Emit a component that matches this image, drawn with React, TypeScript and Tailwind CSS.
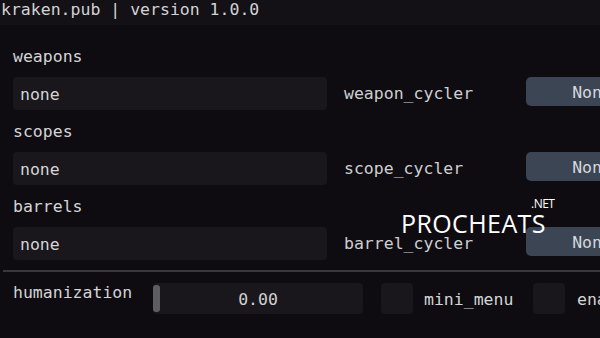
import React from "react";

const mono = { fontFamily: '"DejaVu Sans Mono", "Liberation Mono", monospace' };

function Row({ label, cycler }: { label: string; cycler: string }) {
  return (
    <div className="flex flex-col">
      <div className="h-[26px] flex items-center text-[16.5px] text-[#d4d4d6]">{label}</div>
      <div className="mt-[7px] flex items-start">
        <div className="w-[314px] h-[33px] shrink-0 rounded-[4px] bg-[#19171c] flex items-center pl-[7px] pt-[3px] text-[16.5px] text-[#d4d4d6]">
          none
        </div>
        <div className="ml-[17px] w-[182px] h-[33px] shrink-0 flex items-center pt-[2px] text-[16.5px] text-[#cfcfd2]">{cycler}</div>
        <div className="w-[132px] h-[29px] shrink-0 rounded-[5px] bg-[#3b4553] flex items-center justify-center pt-[3px] text-[16.5px] text-[#d6d8dc]">
          None
        </div>
      </div>
    </div>
  );
}

export default function App() {
  return (
    <div className="relative w-[600px] h-[338px] overflow-hidden bg-[#0e0c10]" style={mono}>
      <div className="h-[25px] bg-[#131116] flex items-start">
        <div className="pl-[1px] leading-[20px] text-[16.5px] text-[#d2d2d4] whitespace-pre">kraken.pub | version 1.0.0</div>
      </div>
      <div className="pl-[13px] pt-[19px] flex flex-col gap-[9px] whitespace-nowrap">
        <Row label="weapons" cycler="weapon_cycler" />
        <Row label="scopes" cycler="scope_cycler" />
        <Row label="barrels" cycler="barrel_cycler" />
      </div>
      <div className="mt-[10px] ml-[3px] h-[2px] bg-[#38373c]" />
      <div className="mt-[11px] pl-[13px] flex items-start whitespace-nowrap">
        <div className="w-[140px] h-[20px] shrink-0 flex items-center text-[16.5px] text-[#d4d4d6]">humanization</div>
        <div className="w-[210px] h-[31px] shrink-0 rounded-[4px] bg-[#19171c] relative flex items-center justify-center pt-[3px] text-[16.5px] text-[#d0d0d2]">
          <div className="absolute left-0 top-[2px] w-[7px] h-[27px] rounded-[3px] bg-[#5e5d62]" />
          0.00
        </div>
        <div className="ml-[18px] w-[32px] h-[31px] shrink-0 rounded-[4px] bg-[#19171c]" />
        <div className="ml-[11px] w-[109px] h-[31px] shrink-0 flex items-center pt-[3px] text-[16.5px] text-[#d4d4d6]">mini_menu</div>
        <div className="w-[32px] h-[31px] shrink-0 rounded-[4px] bg-[#19171c]" />
        <div className="ml-[12px] h-[31px] shrink-0 flex items-center pt-[3px] text-[16.5px] text-[#d4d4d6]">enabled</div>
      </div>
      <div className="absolute left-[401px] top-[208px] text-white" style={{ fontFamily: '"Open Sans", "Noto Sans", sans-serif' }}>
        <div className="absolute left-[130px] top-[-10px] text-[12px] leading-none tracking-[-0.5px]">.NET</div>
        <div className="text-[25px] leading-[30px] tracking-[0.4px]">PROCHEATS</div>
      </div>
    </div>
  );
}
